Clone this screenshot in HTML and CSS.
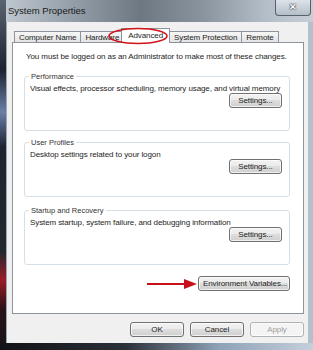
FILE: index.html
```html
<!DOCTYPE html>
<html lang="en">

<head>
    <meta charset="UTF-8">
    <title>System Properties</title>
    <link rel="stylesheet" href="styles.css">
</head>

<body>
    <div class="window">
        <div class="titlebar">
            <span class="title">System Properties</span>
            <span class="closeButton">&#x2715;</span>
        </div>

        <div class="client">
            <!-- Tab strip -->
            <div class="tabs">
                <div class="tab">Computer Name</div>
                <div class="tab">Hardware</div>
                <div class="tab selected">Advanced</div>
                <div class="tab">System Protection</div>
                <div class="tab">Remote</div>
                <svg class="tabCircle" width="62" height="18" viewBox="0 0 62 18">
                    <ellipse cx="31" cy="9" rx="29" ry="7.5" fill="none" stroke="#d0141c" stroke-width="1.6" />
                </svg>
            </div>

            <div class="panel">
                <p class="intro">You must be logged on as an Administrator to make most of these changes.</p>

                <fieldset class="group">
                    <legend>Performance</legend>
                    <p>Visual effects, processor scheduling, memory usage, and virtual memory</p>
                    <div class="groupButtons"><button class="winButton">Settings...</button></div>
                </fieldset>

                <fieldset class="group">
                    <legend>User Profiles</legend>
                    <p>Desktop settings related to your logon</p>
                    <div class="groupButtons"><button class="winButton">Settings...</button></div>
                </fieldset>

                <fieldset class="group startupGroup">
                    <legend>Startup and Recovery</legend>
                    <p>System startup, system failure, and debugging information</p>
                    <div class="groupButtons"><button class="winButton">Settings...</button></div>
                </fieldset>

                <div class="envRow">
                    <svg class="arrow" width="50" height="10" viewBox="0 0 50 10">
                        <line x1="0" y1="5" x2="40" y2="5" stroke="#c8101a" stroke-width="2" />
                        <polygon points="37,0 50,5 37,10" fill="#c8101a" />
                    </svg>
                    <button class="winButton envButton">Environment Variables...</button>
                </div>
            </div>

            <div class="dialogButtons">
                <button class="winButton">OK</button>
                <button class="winButton">Cancel</button>
                <button class="winButton" disabled>Apply</button>
            </div>
        </div>
    </div>
</body>

</html>
```

FILE: styles.css
```css
body {
    margin: 0;
    padding: 0;
    background-color: #20242c;
    font-family: "Liberation Sans", Arial, sans-serif;
}

.window {
    width: 313px;
    height: 350px;
    box-sizing: border-box;
    padding: 0 5px 7px 7px;
    display: flex;
    flex-direction: column;
    background: linear-gradient(to right, #9ca6b0 0, #a9b4be 40%, #b6c0ca 100%);
    position: relative;
    overflow: hidden;
}

.window::before {
    content: "";
    position: absolute;
    left: 0;
    top: 0;
    bottom: 0;
    width: 6px;
    background: linear-gradient(to bottom, #5a6470 0, #1c2230 20%, #6a7ea8 32%, #1e2430 42%, #24282e 72%, #9a1c26 80%, #2a1418 88%, #141418 100%);
}

.window::after {
    content: "";
    position: absolute;
    left: 0;
    right: 0;
    bottom: 0;
    height: 7px;
    background: linear-gradient(to right, #101216 0, #2a3038 40%, #8ea2b8 70%, #c4d0dc 100%);
}

.titlebar {
    height: 22px;
    display: flex;
    align-items: center;
    justify-content: space-between;
    margin-left: -7px;
    margin-right: -5px;
    padding-left: 8px;
    background: linear-gradient(to right, #c2cad2 0, #9aa4ae 20%, #6e7882 45%, #8a949e 65%, #b4bec8 85%, #c6ced6 100%);
}

.title {
    font-size: 9.5px;
    color: #1a1a1a;
    margin-top: -1px;
}

.closeButton {
    align-self: flex-start;
    width: 34px;
    height: 15px;
    margin-right: 2px;
    border: 1px solid #58606a;
    border-top: none;
    border-radius: 0 0 4px 4px;
    background: linear-gradient(to bottom, #dde3e9, #b4bec8);
    color: #fff;
    font-size: 9px;
    font-weight: bold;
    text-align: center;
    line-height: 14px;
    text-shadow: 0 0 2px #222, 0 0 1px #222;
}

.client {
    flex: 1;
    background-color: #f0f0f0;
    padding: 6px 4px 0 5px;
    display: flex;
    flex-direction: column;
    position: relative;
    z-index: 1;
}

/* Tabs */
.tabs {
    display: flex;
    align-items: flex-end;
    height: 14px;
    padding-left: 2px;
    position: relative;
}

.tab {
    height: 10px;
    padding: 0 4px;
    font-size: 8px;
    letter-spacing: -0.1px;
    line-height: 11px;
    color: #1e1e1e;
    border: 1px solid #8e949c;
    border-bottom: none;
    margin-right: -1px;
    background: linear-gradient(to bottom, #f6f6f6, #e4e4e4);
}

.tab.selected {
    height: 14px;
    line-height: 13px;
    background: #fff;
    margin: 0 -1px -1px -2px;
    padding: 0 6px;
    position: relative;
    z-index: 2;
}

.tabCircle {
    position: absolute;
    left: 95px;
    top: -1px;
    z-index: 3;
}

/* Tab page */
.panel {
    height: 272px;
    box-sizing: border-box;
    background: #fff;
    border: 1px solid #8e949c;
    padding: 0 13px 0 11px;
    display: flex;
    flex-direction: column;
}

.intro {
    font-size: 8px;
    letter-spacing: -0.1px;
    color: #1e1e1e;
    margin: 9px 0 0 2px;
    white-space: nowrap;
}

.group {
    margin: 11px 0 0 0;
    padding: 0 7px 7px 5px;
    border: 1px solid #d5dfe5;
    border-radius: 3px;
    height: 59px;
    box-sizing: border-box;
    display: flex;
    flex-direction: column;
}

.group + .group {
    margin-top: 7px;
}

.group.startupGroup {
    margin-top: 9px;
}

.group legend {
    font-size: 7.5px;
    color: #333;
    padding: 0 2px;
    margin-left: -1px;
}

.group p {
    font-size: 8px;
    letter-spacing: -0.1px;
    color: #1e1e1e;
    margin: 3px 0 0 0;
    white-space: nowrap;
}

.groupButtons {
    margin-top: auto;
    display: flex;
    justify-content: flex-end;
}

.winButton {
    font-family: "Liberation Sans", Arial, sans-serif;
    font-size: 8px;
    letter-spacing: -0.1px;
    color: #1e1e1e;
    height: 15px;
    min-width: 53px;
    padding: 0 4px;
    white-space: nowrap;
    border: 1px solid #707070;
    border-radius: 3px;
    background: linear-gradient(to bottom, #f2f2f2 0, #ebebeb 45%, #dddddd 50%, #cfcfcf 100%);
    box-shadow: inset 0 0 0 1px rgba(255, 255, 255, 0.7);
}

.winButton:disabled {
    color: #a0a0a0;
    border-color: #adb2b5;
    background: #f4f4f4;
}

.envRow {
    margin-top: 11px;
    display: flex;
    align-items: center;
    justify-content: flex-end;
}

.arrow {
    margin-right: 1px;
}

.envButton {
    width: 92px;
}

.dialogButtons {
    display: flex;
    justify-content: flex-end;
    gap: 6px;
    margin-top: 8px;
}

.dialogButtons .winButton {
    width: 54px;
}
```
